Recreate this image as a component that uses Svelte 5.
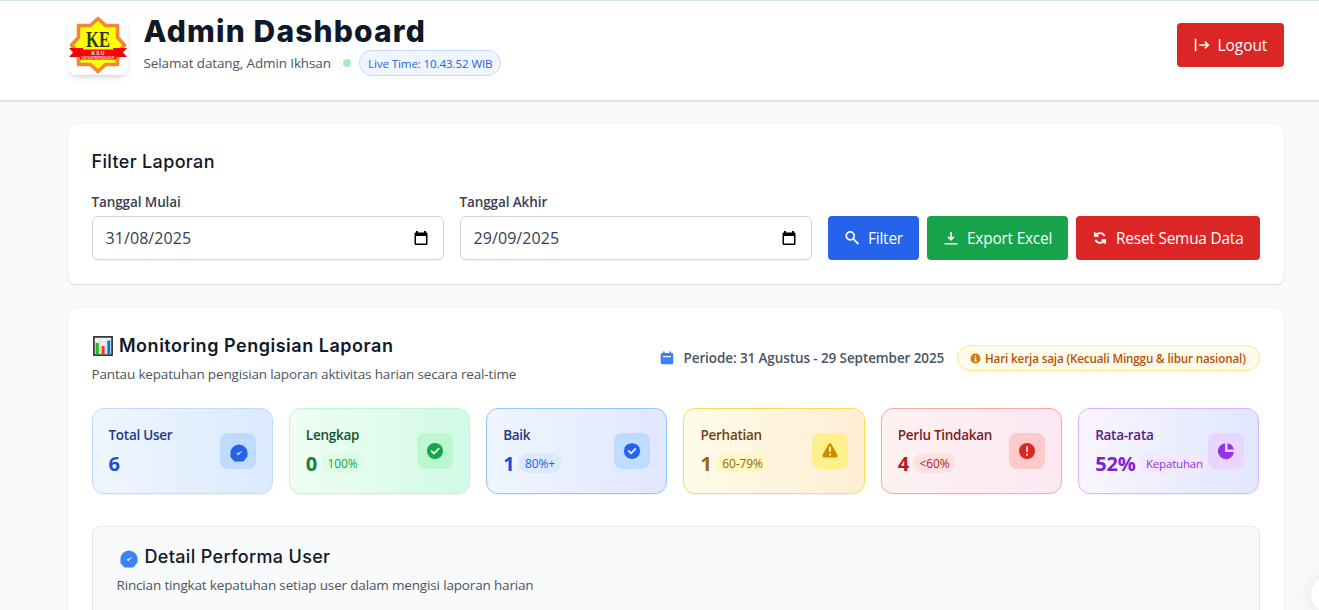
<script>
  const dates = [
    { label: 'Tanggal Mulai', value: '31/08/2025' },
    { label: 'Tanggal Akhir', value: '29/09/2025' }
  ];
  const stats = [
    { tone: 'blue', label: 'Total User', value: '6', note: '', icon: 'dial' },
    { tone: 'green', label: 'Lengkap', value: '0', note: '100%', icon: 'check' },
    { tone: 'indigo', label: 'Baik', value: '1', note: '80%+', icon: 'badge' },
    { tone: 'yellow', label: 'Perhatian', value: '1', note: '60-79%', icon: 'warn' },
    { tone: 'red', label: 'Perlu Tindakan', value: '4', note: '<60%', icon: 'alert' },
    { tone: 'purple', label: 'Rata-rata', value: '52%', note: 'Kepatuhan', icon: 'pie' }
  ];
</script>

{#snippet icon(name, size)}
  <svg class="icon" width={size} height={size} viewBox="0 0 20 20" fill="currentColor" aria-hidden="true">
    {#if name === 'logout'}
      <path d="M2 2.2v15.6M6.5 10H18M13.6 5.8 17.8 10l-4.2 4.2" fill="none" stroke="currentColor" stroke-width="2" />
    {:else if name === 'search'}
      <circle cx="7.8" cy="7.3" r="5" fill="none" stroke="currentColor" stroke-width="2.1" />
      <path d="m11.7 11.2 6.3 6.3" stroke="currentColor" stroke-width="2.3" />
    {:else if name === 'download'}
      <path d="M10 2.500V12M6.300 8.500l3.700 3.800 3.700-3.800M2 17.3h16" fill="none" stroke="currentColor" stroke-width="1.9" />
    {:else if name === 'reset'}
      <path d="M3.500 2.800v4.600h4.600M4 7.200C6.500 3 13.500 2.800 15.800 7.600M16.500 17.200v-4.600h-4.600M16 12.800C13.500 17 6.500 17.200 4.200 12.400" fill="none" stroke="currentColor" stroke-width="2.200" />
    {:else if name === 'calendar'}
      <path fill-rule="evenodd" d="M4.2.8h2.4v2h6.8v-2h2.4v2H17a2 2 0 0 1 2 2V17a2 2 0 0 1-2 2H3a2 2 0 0 1-2-2V4.800a2 2 0 0 1 2-2h1.200zM4.500 7v2h11V7z" />
    {:else if name === 'info'}
      <path fill-rule="evenodd" d="M10 1a9 9 0 1 0 0 18 9 9 0 0 0 0-18zM8.700 4.500h2.600V7H8.700zM7.700 8.600h3.600V13.400h1.200v2H7.700v-2h1.200v-2.800H7.700z" />
    {:else if name === 'dial'}
      <path d="M10 .5a9.500 9.500 0 0 1 9.500 9.500v3.500L15 19.500H5L.5 14.500V10A9.500 9.500 0 0 1 10 .5z" />
      <path d="m7.300 10.700 1.900 1.500 4-4.200-3.800 2z" fill="#e6f0ff" stroke="#e6f0ff" stroke-width=".4" />
    {:else if name === 'check'}
      <circle cx="10" cy="10" r="8" />
      <path d="m6.600 10.100 2.400 2.400 4.500-4.700" fill="none" stroke="#dcfce7" stroke-width="1.900" stroke-linecap="round" stroke-linejoin="round" />
    {:else if name === 'badge'}
      <path d="m10 1.900 2 .8 2.200.3 1.500 1.600 1.600 1.500.3 2 .6 1.900-.6 2-.3 2-1.600 1.500-1.500 1.600-2.200.3-2 .7-2-.7-2.200-.3-1.500-1.600L2.700 14l-.3-2-.6-2 .6-1.900.3-2 1.600-1.500L5.800 3 8 2.700z" />
      <path d="m6.800 10 2.300 2.300 4.200-4.400" fill="none" stroke="#dbeafe" stroke-width="1.900" stroke-linecap="round" stroke-linejoin="round" />
    {:else if name === 'warn'}
      <path fill-rule="evenodd" d="M8.600 3.100c.6-1.100 2.200-1.100 2.800 0l6 11c.6 1.100-.1 2.300-1.400 2.300H4c-1.300 0-2-1.200-1.400-2.300zM9 5.800v5h2v-5zm0 6.600v2h2v-2z" />
    {:else if name === 'alert'}
      <path fill-rule="evenodd" d="M10 2a8 8 0 1 0 0 16 8 8 0 0 0 0-16zM9 5.300h2v5.600H9zm0 7.300h2v2.200H9z" />
    {:else if name === 'pie'}
      <path d="M9 2.200V11h8.900A8 8 0 1 1 9 2.200z" />
      <path d="M11.500 2.200A8 8 0 0 1 17.800 8.500h-6.300z" />
    {/if}
  </svg>
{/snippet}

<div class="page">
  <header>
    <div class="brand">
      <div class="logo">
        <svg width="60" height="60" viewBox="0 0 60 60">
          <path d="M30 3.500 37.500 10.500H49.500v12l7 7.500-7 7.500v12h-12L30 56.500 22.500 49.500H10.500v-12L3.500 30l7-7.500v-12h12z" fill="#ffff08" stroke="#f58634" stroke-width="3.600" stroke-linejoin="round" />
          <path d="M1 33h14v9H1l4-4.500zM59 33H45v9h14l-4-4.500z" fill="#f00505" />
          <path d="M12 34.500h36v10H12z" fill="#f90505" />
          <text x="30" y="32" class="ke" text-anchor="middle" textLength="24" lengthAdjust="spacingAndGlyphs">KE</text>
          <text x="30.500" y="40" class="ksu" text-anchor="middle">KSU</text>
          <text x="30" y="43.800" class="tiny" text-anchor="middle" textLength="33" lengthAdjust="spacingAndGlyphs">KARYA ENTREPRENEURSHIP</text>
        </svg>
      </div>
      <div>
        <h1>Admin Dashboard</h1>
        <div class="welcome">
          <span class="body14">Selamat datang, Admin Ikhsan</span>
          <i class="dot"></i>
          <span class="live">Live Time: 10.43.52 WIB</span>
        </div>
      </div>
    </div>
    <button class="btn danger logout">{@render icon('logout', 16)}<span>Logout</span></button>
  </header>

  <main>
    <section class="card filter">
      <h2>Filter Laporan</h2>
      <div class="filter-row">
        {#each dates as d}
          <div class="field">
            <div class="label">{d.label}</div>
            <div class="input">
              <span>{d.value}</span>
              <svg width="14" height="15" viewBox="0 0 14 15"><path fill-rule="evenodd" d="M2 0h2v1.500h6V0h2v1.500h.700A1.300 1.300 0 0 1 13.500 2.800v9.900a1.300 1.300 0 0 1-1.300 1.300H1.800A1.300 1.300 0 0 1 .5 12.700V2.800a1.300 1.300 0 0 1 1.300-1.300H2zM2 5v7.500h10V5z" /></svg>
            </div>
          </div>
        {/each}
        <div class="actions">
          <button class="btn primary">{@render icon('search', 16)}<span>Filter</span></button>
          <button class="btn success">{@render icon('download', 16)}<span>Export Excel</span></button>
          <button class="btn danger">{@render icon('reset', 16)}<span>Reset Semua Data</span></button>
        </div>
      </div>
    </section>

    <section class="card monitor">
      <div class="monitor-head">
        <div>
          <h2 class="strong">
            <svg width="20" height="20" viewBox="0 0 20 20">
              <rect x=".9" y=".9" width="18.200" height="18.200" fill="#f3f4f7" stroke="#24262b" stroke-width="1.600" />
              <path d="M7.500 2v16M13 2v16M2 6h16" stroke="#dcdde2" />
              <path d="M2.600 7h3.200v11.300H2.600z" fill="#16c60c" />
              <path d="M8.600 10h3v8.300h-3z" fill="#f03a17" />
              <path d="M14.300 4.500h3v13.800h-3z" fill="#0078d4" />
            </svg>
            <span>Monitoring Pengisian Laporan</span>
          </h2>
          <p class="sub">Pantau kepatuhan pengisian laporan aktivitas harian secara real-time</p>
        </div>
        <div class="period">
          <span class="cal">{@render icon('calendar', 14)}</span>
          <span class="range">Periode: 31 Agustus - 29 September 2025</span>
          <span class="workdays">{@render icon('info', 11)}<span>Hari kerja saja (Kecuali Minggu &amp; libur nasional)</span></span>
        </div>
      </div>

      <div class="stats">
        {#each stats as s}
          <div class="stat {s.tone}">
            <div class="stat-text">
              <div class="stat-label">{s.label}</div>
              <div class="stat-value"><b>{s.value}</b>{#if s.note}<span>{s.note}</span>{/if}</div>
            </div>
            <div class="tile">{@render icon(s.icon, 20)}</div>
          </div>
        {/each}
      </div>

      <div class="detail">
        <h2><span class="detail-icon">{@render icon('dial', 18)}</span><span>Detail Performa User</span></h2>
        <p class="sub">Rincian tingkat kepatuhan setiap user dalam mengisi laporan harian</p>
      </div>
    </section>
  </main>
  <div class="bubble"></div>
</div>

<style>
  :global(body) { margin: 0; overflow: hidden; }
  * { box-sizing: border-box; }
  .page {
    height: 610px;
    overflow: hidden;
    background: #f9fafb;
    color: #111827;
    font-family: 'Open Sans', 'Noto Sans', sans-serif;
    white-space: nowrap;
  }
  .icon { display: block; flex: none; }
  header {
    display: flex;
    justify-content: space-between;
    align-items: flex-start;
    height: 100px;
    padding: 14px 35px 0 68px;
    border-top: 1px solid #dae4e8;
    background: #fff;
    box-shadow: 0 1px 3px rgba(0, 0, 0, .1), 0 1px 2px rgba(0, 0, 0, .1);
  }
  .brand { display: flex; gap: 15.500px; }
  .logo {
    width: 60px;
    height: 60px;
    border-radius: 8px;
    background: #fff;
    box-shadow: 0 4px 6px -1px rgba(0, 0, 0, .1), 0 2px 4px -2px rgba(0, 0, 0, .1);
  }
  .logo svg { display: block; }
  .ke { font: 700 23px 'Liberation Serif', serif; fill: #33351c; }
  .ksu { font: 700 5px 'Liberation Sans', sans-serif; fill: #fff; letter-spacing: 1.200px; }
  .tiny { font: 700 2.600px 'Liberation Sans', sans-serif; fill: #ffd6d0; }
  h1 {
    margin: -2px 0 0;
    padding-bottom: 1px;
    font: 800 30px/36px Inter, sans-serif;
    letter-spacing: 1.150px;
  }
  .welcome { display: flex; align-items: center; height: 26px; color: #4b5563; }
  .body14 { width: 187.500px; font-size: 13.500px; letter-spacing: -.12px; }
  .dot { width: 8px; height: 8px; margin: 0 8px 0 12px; border-radius: 50%; background: #a3edbb; }
  .live {
    width: 142px;
    height: 26px;
    padding: 0 8px;
    border: 1px solid #bfdbfe;
    border-radius: 13px;
    background: #eff6ff;
    color: #2563eb;
    font-size: 11.600px;
    line-height: 25px;
    letter-spacing: -.12px;
  }
  .btn {
    display: flex;
    align-items: center;
    gap: 8px;
    height: 44px;
    padding: 1px 0 0 16px;
    border: 0;
    border-radius: 4px;
    color: #fff;
    font: 400 15.400px 'Open Sans', sans-serif;
    letter-spacing: -.2px;
  }
  .btn .icon { margin-top: -1px; }
  .primary { width: 91px; padding-left: 16.500px; background: #2563eb; }
  .success { width: 141px; padding-left: 16.500px; background: #16a34a; }
  .danger { width: 184px; padding-left: 16.500px; background: #dc2626; }
  .logout { width: 107px; margin-top: 8px; letter-spacing: 0; }
  main { display: flex; flex-direction: column; gap: 24px; padding: 24px 35.500px 0 67.500px; }
  .card {
    border-radius: 8px;
    background: #fff;
    box-shadow: 0 0 2px rgba(0, 0, 0, .08), 0 1px 2px rgba(0, 0, 0, .1);
  }
  .filter { height: 160px; padding: 24px; }
  h2 {
    display: flex;
    align-items: center;
    margin: 0;
    font: 500 18px/28px Inter, sans-serif;
    letter-spacing: .34px;
  }
  .filter-row { display: flex; align-items: flex-end; gap: 16px; margin-top: 16px; }
  .field { width: 352px; }
  .label { height: 24px; color: #374151; font-size: 13.500px; font-weight: 600; line-height: 21px; letter-spacing: -.1px; }
  .input {
    display: flex;
    align-items: center;
    justify-content: space-between;
    height: 44px;
    padding: 0 15px 0 13px;
    border: 1px solid #d1d5db;
    border-radius: 6px;
    background: #fff;
    color: #374151;
    font-size: 16px;
    letter-spacing: .08px;
    box-shadow: 0 1px 2px rgba(0, 0, 0, .05);
  }
  .actions { display: flex; gap: 8px; }
  .monitor { padding: 24px; }
  .monitor-head { display: flex; align-items: center; justify-content: space-between; height: 52px; }
  .strong { gap: 6px; padding-left: 1.500px; font-weight: 600; letter-spacing: .52px; }
  .sub { margin: 4px 0 0; color: #4b5563; font-size: 13.500px; line-height: 21px; letter-spacing: -.16px; }
  .period { display: flex; align-items: center; }
  .cal { color: #3b82f6; }
  .range { width: 273px; margin-left: 10px; color: #4b5563; font-size: 13.500px; font-weight: 600; letter-spacing: -.1px; }
  .workdays {
    display: flex;
    align-items: center;
    gap: 4px;
    width: 303px;
    height: 26px;
    padding-left: 12.500px;
    border: 1px solid #fde68a;
    border-radius: 13px;
    background: #fffbeb;
    color: #b45309;
    font-size: 11.600px;
    font-weight: 600;
    letter-spacing: -.12px;
  }
  .workdays .icon { color: #d97706; }
  .stats { display: grid; grid-template-columns: repeat(6, 1fr); gap: 16px; margin-top: 24px; }
  .stat {
    display: flex;
    align-items: center;
    justify-content: space-between;
    min-width: 0;
    height: 86px;
    padding: 0 16px;
    border: 1px solid;
    border-radius: 12px;
    box-shadow: 0 1px 2px rgba(0, 0, 0, .05);
  }
  .stat-text { min-width: 0; width: 111px; }
  .stat-label { font-size: 13.500px; font-weight: 600; line-height: 21px; letter-spacing: -.27px; }
  .stat-value { display: flex; align-items: center; gap: 4px; height: 28px; margin-top: 3px; }
  .stat-value b { font-size: 20px; letter-spacing: -.200px; }
  .stat-value span { height: 20px; padding: 0 6.500px; border-radius: 10px; font-size: 12px; line-height: 21px; letter-spacing: -.1px; }
  .tile { display: grid; place-items: center; flex: none; width: 36px; height: 36px; border-radius: 8px; z-index: 1; }
  .blue { border-color: #bfdbfe; background: linear-gradient(90deg, #eff6ff, #dbeafe); }
  .blue .stat-label { color: #1e3a8a; }
  .blue b { color: #1d4ed8; }
  .blue .tile { padding: 3px 0 0 3px; background: #bfdbfe; color: #2563eb; }
  .blue .tile .icon { width: 18px; height: 18px; }
  .green { border-color: #bbf7d0; background: linear-gradient(90deg, #f0fdf4, #d1fae5); }
  .green .stat-label { color: #14532d; }
  .green b { color: #15803d; }
  .green .stat-value span { background: #dcfce7; color: #16a34a; }
  .green .tile { background: #bbf7d0; color: #16a34a; }
  .indigo { border-color: #93c5fd; background: linear-gradient(90deg, #eff6ff, #e0e7ff); }
  .indigo .stat-label { color: #1e3a8a; }
  .indigo b { color: #1d4ed8; }
  .indigo .stat-value span { background: #dbeafe; color: #2563eb; }
  .indigo .tile { background: #bfdbfe; color: #2563eb; }
  .yellow { border-color: #fde047; background: linear-gradient(90deg, #fefce8, #ffedd5); }
  .yellow .stat-label { color: #713f12; }
  .yellow b { color: #a16207; }
  .yellow .stat-value span { background: #fef9c3; color: #a16207; }
  .yellow .tile { background: #fef08a; color: #ca8a04; }
  .red { border-color: #fca5a5; background: linear-gradient(90deg, #fef2f2, #fce7f3); }
  .red .stat-label { color: #7f1d1d; }
  .red b { color: #b91c1c; }
  .red .stat-value span { background: #fee2e2; color: #b91c1c; }
  .red .tile { background: #fecaca; color: #dc2626; }
  .purple { padding-right: 14px; border-color: #d8b4fe; background: linear-gradient(90deg, #faf5ff, #e0e7ff); }
  .purple .stat-label { color: #581c87; }
  .purple b { color: #7e22ce; }
  .purple .stat-value span { background: #f3e8ff; color: #9333ea; font-size: 11.600px; letter-spacing: -.24px; }
  .purple .tile { background: #e9d5ff; color: #9333ea; }
  .detail {
    height: 200px;
    margin-top: 32px;
    padding: 16px 24px;
    border: 1px solid #e5e7eb;
    border-radius: 8px;
    background: #f9fafb;
  }
  .detail .sub { margin-top: 4px; }
  .detail-icon { margin: 3px 7px 0 3px; color: #3b82f6; }
  .bubble {
    position: fixed;
    top: 576px;
    left: 1311px;
    width: 36px;
    height: 36px;
    border-radius: 50%;
    background: #fff;
    box-shadow: 0 0 24px rgba(0, 0, 0, .1);
  }
</style>
